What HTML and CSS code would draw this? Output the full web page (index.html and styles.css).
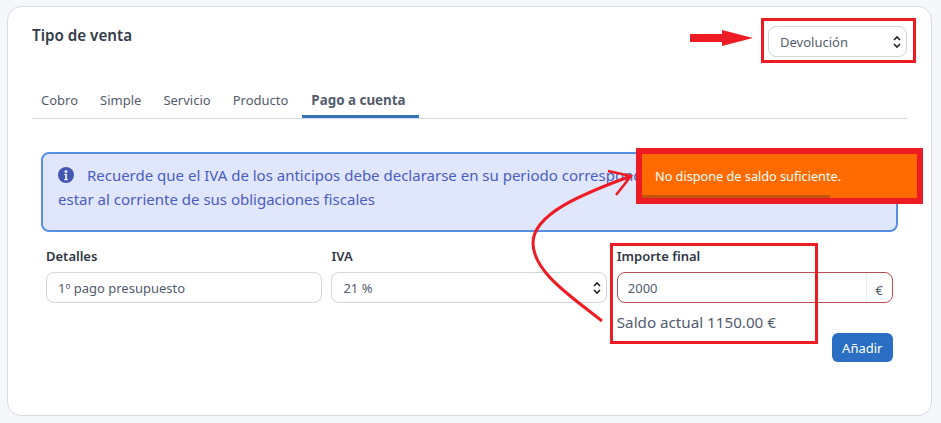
FILE: index.html
```html
<!DOCTYPE html>
<html lang="es">
<head>
    <meta charset="UTF-8">
    <meta name="viewport" content="width=device-width, initial-scale=1.0">
    <title>Tipo de venta</title>
    <link rel="stylesheet" href="styles.css">
</head>
<body>
    <div class="card">
        <div class="card-header">
            <h2>Tipo de venta</h2>
            <select class="field select-type">
                <option>Devolución</option>
            </select>
        </div>

        <ul class="tabs">
            <li>Cobro</li>
            <li>Simple</li>
            <li>Servicio</li>
            <li>Producto</li>
            <li class="active">Pago a cuenta</li>
        </ul>

        <div class="alert">
            <svg class="alert-icon" viewBox="0 0 16 16">
                <circle cx="8" cy="8" r="8" fill="#4257b2"></circle>
                <circle cx="8" cy="4.4" r="1.5" fill="#e0e6fc"></circle>
                <path d="M6.2 6.8h2.9v5.1h1v1.3H6.1v-1.3h1V8.1h-.9z" fill="#e0e6fc"></path>
            </svg>
            Recuerde que el IVA de los anticipos debe declararse en su periodo correspondiente y además debe<br>
            estar al corriente de sus obligaciones fiscales
        </div>

        <form class="form-row">
            <div class="input-group">
                <label for="detalles">Detalles</label>
                <input class="field" type="text" id="detalles" value="1º pago presupuesto">
            </div>
            <div class="input-group">
                <label for="iva">IVA</label>
                <select class="field" id="iva">
                    <option>21 %</option>
                </select>
            </div>
            <div class="input-group">
                <label for="importe">Importe final</label>
                <div class="amount">
                    <input type="text" id="importe" value="2000">
                    <span>€</span>
                </div>
                <p class="balance">Saldo actual 1150.00 €</p>
                <div class="btn-container">
                    <button type="button" class="btn">Añadir</button>
                </div>
            </div>
        </form>
    </div>

    <!-- Annotations painted over the screenshot -->
    <svg class="marks" viewBox="0 0 941 423">
        <path d="M690 34h32v-4l31 8-31 8v-4h-32z" fill="#ed1c24"></path>
        <path d="M602 321C572 297 533 272 533 243C533 214 582 194 631 176" fill="none" stroke="#ed1c24" stroke-width="3"></path>
        <path d="M608 171L631 176L616 195" fill="none" stroke="#ed1c24" stroke-width="2.5"></path>
    </svg>
    <div class="mark-box mark-select"></div>
    <div class="mark-box mark-amount"></div>
    <div class="toast">
        No dispone de saldo suficiente.
        <div class="toast-progress"></div>
    </div>
</body>
</html>
```

FILE: styles.css
```css
body {
    font-family: 'Noto Sans', 'Open Sans', sans-serif;
    margin: 0;
    padding: 6px 9px 7px 7px;
    box-sizing: border-box;
    height: 423px;
    overflow: hidden;
    background-color: #f6f7fa;
    color: #525c6e;
}

.card {
    box-sizing: border-box;
    height: 410px;
    padding: 19px 24px;
    background-color: #ffffff;
    border: 1px solid #d5dae6;
    border-radius: 14px;
}

.card-header {
    display: flex;
    justify-content: space-between;
    align-items: flex-start;
    height: 59px;
}

.card-header h2 {
    margin: -1px 0 0;
    font-size: 15.2px;
    line-height: 20px;
    font-weight: 600;
    color: #333b48;
}

.field {
    box-sizing: border-box;
    width: 100%;
    height: 31px;
    padding: 0 11px;
    background-color: #ffffff;
    border: 1px solid #cfd5e1;
    border-radius: 8px;
    font-family: inherit;
    font-size: 13px;
    color: #525c6e;
}

select.field {
    appearance: none;
    background-image: url("data:image/svg+xml,%3Csvg xmlns='http://www.w3.org/2000/svg' viewBox='0 0 10 16'%3E%3Cpath d='M2 6l3-3 3 3M2 10l3 3 3-3' fill='none' stroke='%23222' stroke-width='1.6'/%3E%3C/svg%3E");
    background-repeat: no-repeat;
    background-position: right 4px center;
    background-size: 10px 16px;
}

.select-type {
    width: 139px;
}

/* Tabs */
.tabs {
    display: flex;
    gap: 4px;
    list-style: none;
    height: 33px;
    margin: 0;
    padding: 0;
    border-bottom: 1px solid #d5dae6;
}

.tabs li {
    box-sizing: border-box;
    height: 33px;
    padding: 5px 9px 0;
    font-size: 13px;
    line-height: 20px;
}

.tabs li.active {
    margin-left: 1px;
    padding-right: 13px;
    font-size: 13.4px;
    font-weight: 700;
    border-bottom: 3px solid #3273b8;
}

/* Info alert */
.alert {
    box-sizing: border-box;
    height: 80px;
    margin: 33px 9px 0;
    padding: 9px 15px;
    background-color: #e0e6fc;
    border: 2px solid #5590e6;
    border-radius: 8px;
    font-size: 15px;
    line-height: 24px;
    color: #4a5cc0;
    white-space: nowrap;
    overflow: hidden;
}

.alert-icon {
    width: 16px;
    height: 16px;
    margin-right: 9px;
    vertical-align: -2px;
}

/* Form */
.form-row {
    display: grid;
    grid-template-columns: repeat(3, 276px);
    column-gap: 9.4px;
    margin: 14px 14px 0;
}

.input-group label {
    display: block;
    margin-bottom: 6px;
    font-size: 13px;
    line-height: 20px;
    font-weight: 600;
    color: #2f3744;
}

.amount {
    box-sizing: border-box;
    display: flex;
    height: 31px;
    border: 1px solid #bb4d4f;
    border-radius: 8px;
}

.amount input {
    flex: 1;
    min-width: 0;
    padding: 0 10px;
    border: none;
    background: none;
    outline: none;
    font-family: inherit;
    font-size: 13px;
    color: #525c6e;
}

.amount span {
    width: 25px;
    border-left: 1px solid #e8ebf1;
    text-align: center;
    font-size: 13px;
    line-height: 35px;
}

.balance {
    margin: 8px 0 0;
    font-size: 15.2px;
    line-height: 22px;
}

.btn-container {
    display: flex;
    justify-content: flex-end;
}

.btn {
    padding: 0;
    width: 61px;
    height: 29px;
    background-color: #2a6fc4;
    color: #ffffff;
    border: none;
    border-radius: 6px;
    font-family: inherit;
    font-size: 13px;
}

/* Annotations */
.marks {
    position: absolute;
    top: 0;
    left: 0;
    width: 941px;
    height: 423px;
}

.mark-box {
    position: absolute;
    box-sizing: border-box;
    border: 3px solid #ed1c24;
}

.mark-select {
    top: 18px;
    left: 761px;
    width: 155px;
    height: 45px;
}

.mark-amount {
    top: 243px;
    left: 610px;
    width: 208px;
    height: 101px;
}

.toast {
    position: absolute;
    top: 148px;
    left: 636px;
    box-sizing: border-box;
    width: 287px;
    height: 56px;
    padding: 14px 13px;
    background-color: #ff6b00;
    border: 6px solid #ed1c24;
    font-size: 12.7px;
    line-height: 16px;
    color: #ffffff;
}

.toast-progress {
    position: absolute;
    left: 0;
    bottom: 0;
    width: 188px;
    height: 3px;
    background-color: #c4540c;
}
```
